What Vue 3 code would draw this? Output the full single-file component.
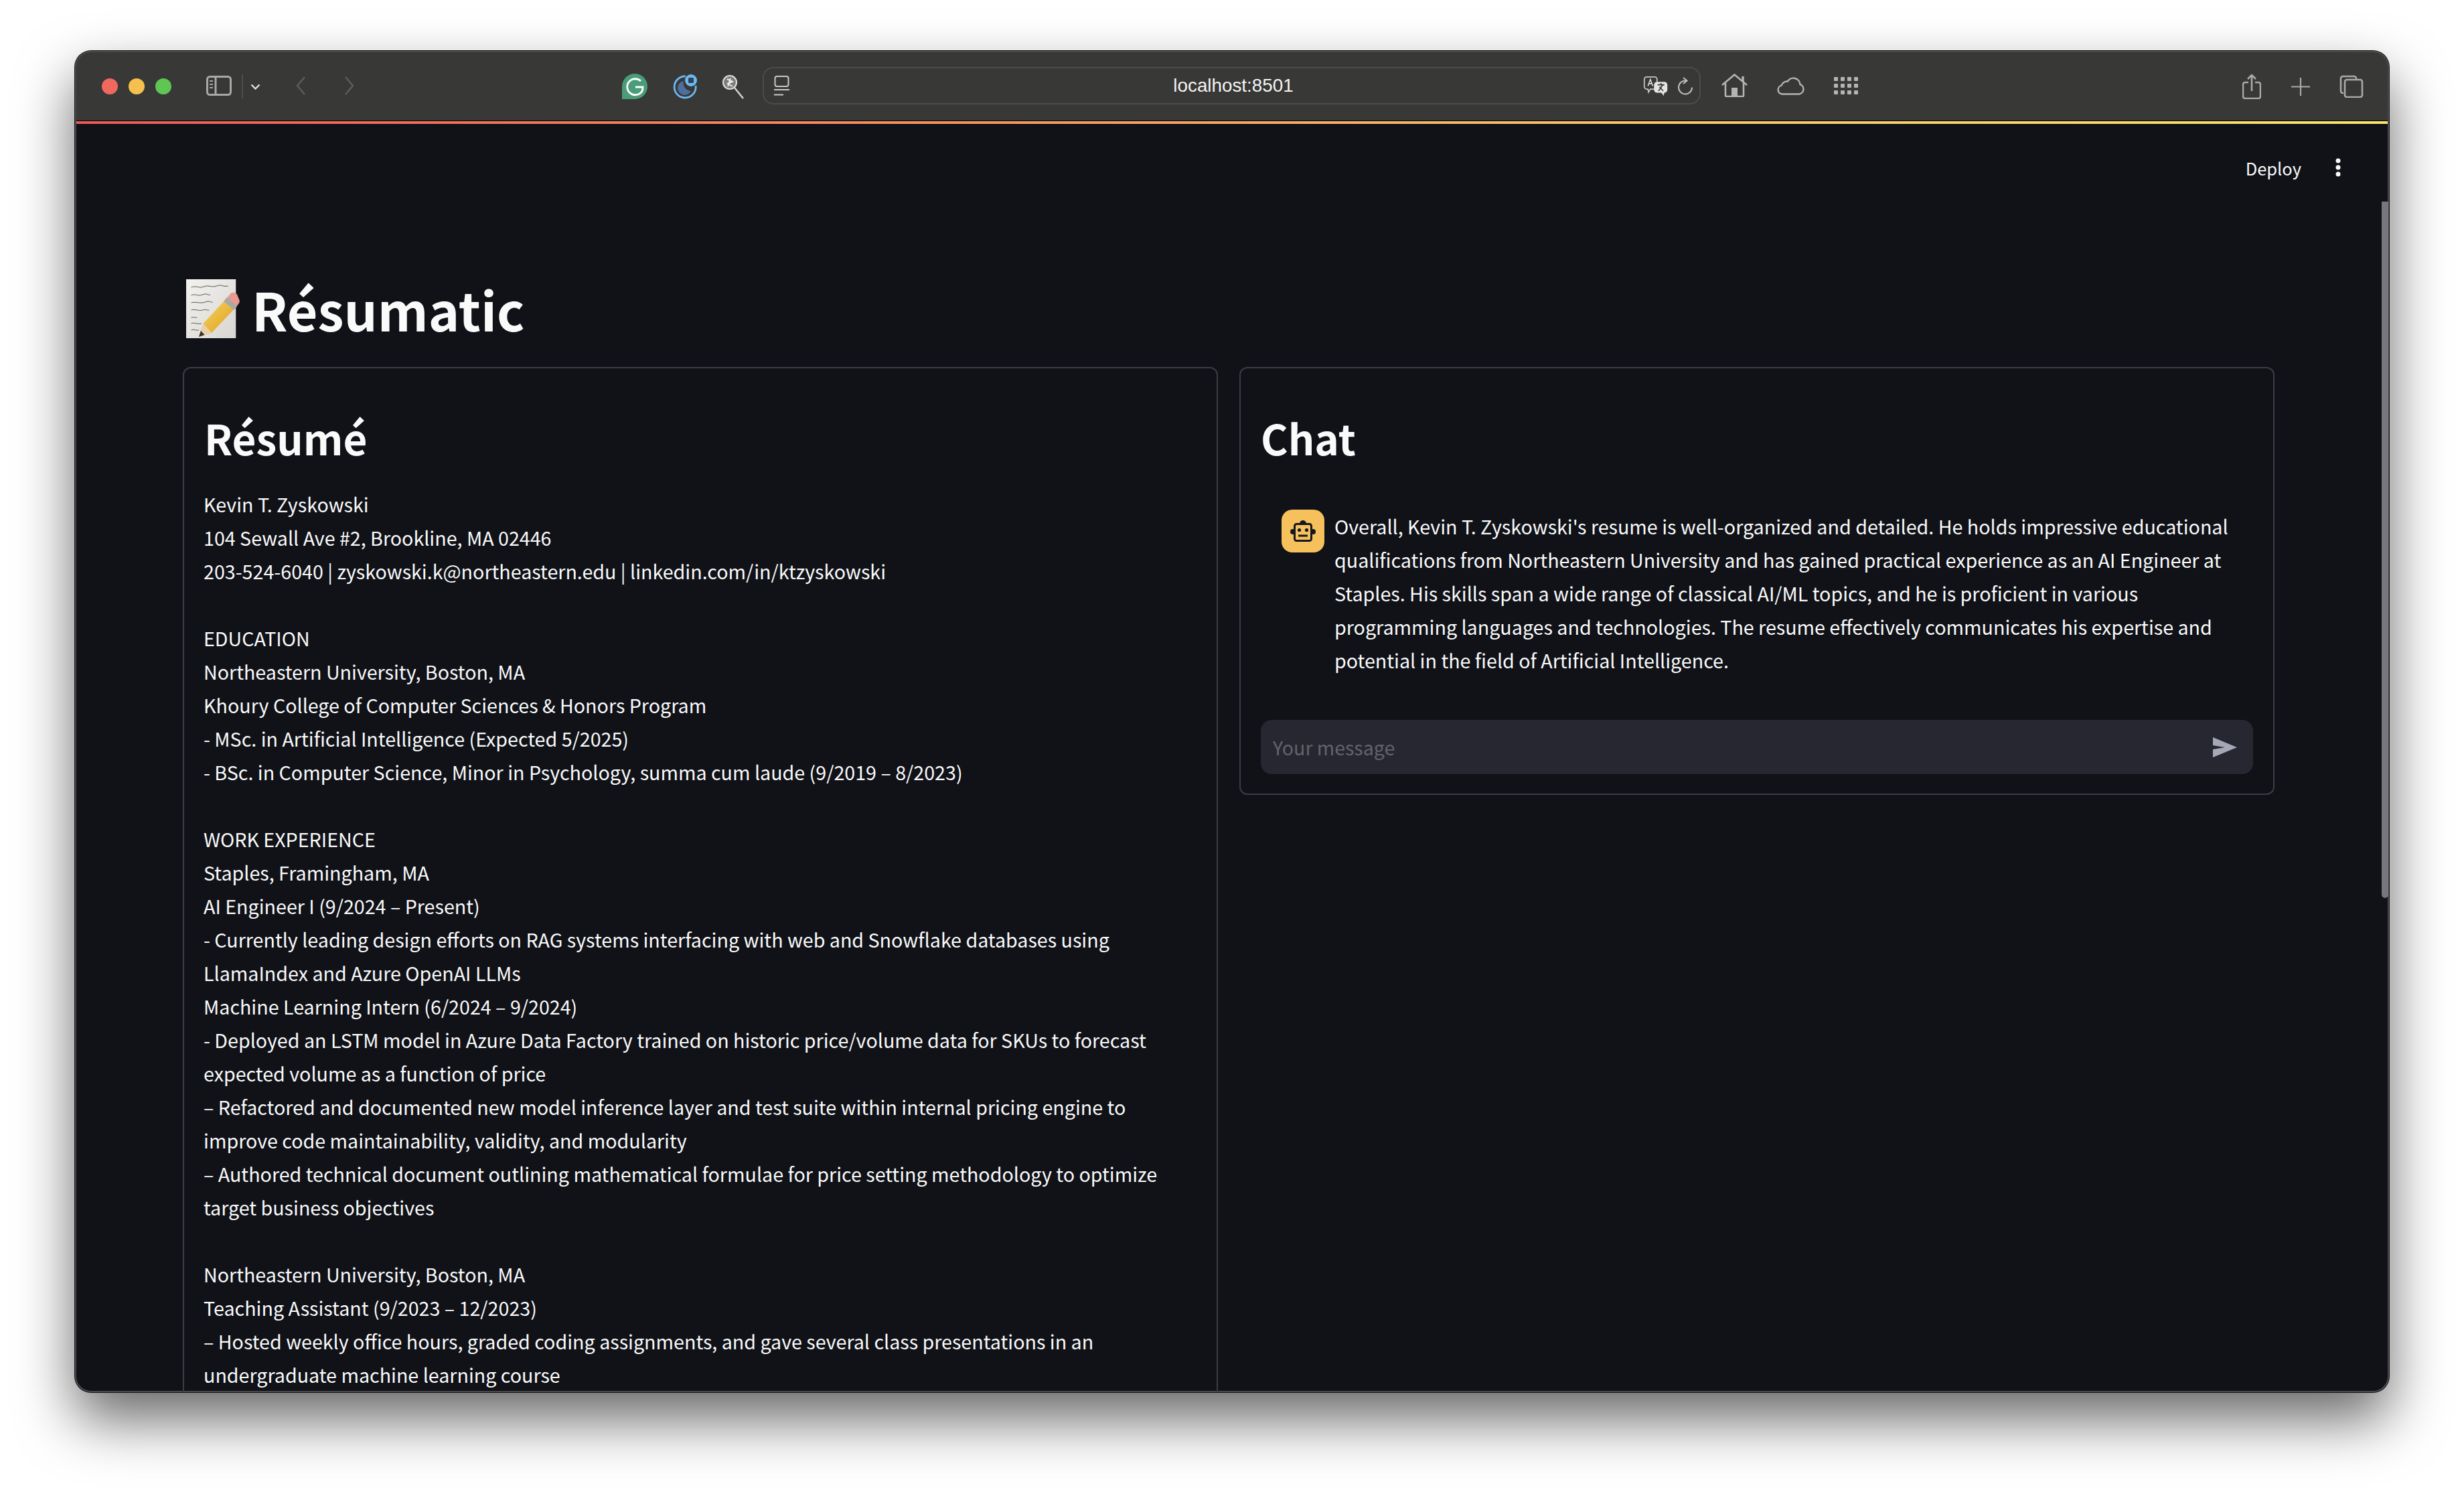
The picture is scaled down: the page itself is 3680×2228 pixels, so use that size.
<script setup>
const resume = [
  'Kevin T. Zyskowski',
  '104 Sewall Ave #2, Brookline, MA 02446',
  '203-524-6040 | zyskowski.k@northeastern.edu | linkedin.com/in/ktzyskowski',
  '',
  'EDUCATION',
  'Northeastern University, Boston, MA',
  'Khoury College of Computer Sciences & Honors Program',
  '- MSc. in Artificial Intelligence (Expected 5/2025)',
  '- BSc. in Computer Science, Minor in Psychology, summa cum laude (9/2019 – 8/2023)',
  '',
  'WORK EXPERIENCE',
  'Staples, Framingham, MA',
  'AI Engineer I (9/2024 – Present)',
  '- Currently leading design efforts on RAG systems interfacing with web and Snowflake databases using',
  'LlamaIndex and Azure OpenAI LLMs',
  'Machine Learning Intern (6/2024 – 9/2024)',
  '- Deployed an LSTM model in Azure Data Factory trained on historic price/volume data for SKUs to forecast',
  'expected volume as a function of price',
  '– Refactored and documented new model inference layer and test suite within internal pricing engine to',
  'improve code maintainability, validity, and modularity',
  '– Authored technical document outlining mathematical formulae for price setting methodology to optimize',
  'target business objectives',
  '',
  'Northeastern University, Boston, MA',
  'Teaching Assistant (9/2023 – 12/2023)',
  '– Hosted weekly office hours, graded coding assignments, and gave several class presentations in an',
  'undergraduate machine learning course',
]
const chat = [
  "Overall, Kevin T. Zyskowski's resume is well-organized and detailed. He holds impressive educational",
  'qualifications from Northeastern University and has gained practical experience as an AI Engineer at',
  'Staples. His skills span a wide range of classical AI/ML topics, and he is proficient in various',
  'programming languages and technologies. The resume effectively communicates his expertise and',
  'potential in the field of Artificial Intelligence.',
]
</script>

<template>
  <div class="page">
    <div class="window">
      <header class="toolbar">
        <div class="lights"><i class="r"></i><i class="y"></i><i class="g"></i></div>
        <svg class="ic sidebar" width="38" height="30" viewBox="0 0 38 30" fill="none" stroke="#a8a8a8" stroke-width="3"><rect x="1.500" y="1.500" width="35" height="27" rx="4"/><path d="M14 1.500v27"/><path d="M5 8h5M5 13h5M5 18h5" stroke-width="2"/></svg>
        <i class="divider"></i>
        <svg class="ic chev" width="15" height="9" viewBox="0 0 15 9" fill="none" stroke="#e0e0e0" stroke-width="2.400"><path d="M1.500 1.500l6 6 6-6"/></svg>
        <svg class="ic back" width="16" height="30" viewBox="0 0 16 30" fill="none" stroke="#5c5c5c" stroke-width="2.500"><path d="M14 2L3 15l11 13"/></svg>
        <svg class="ic fwd" width="17" height="30" viewBox="0 0 17 30" fill="none" stroke="#5c5c5c" stroke-width="2.500"><path d="M3 2l11 13L3 28"/></svg>
        <svg class="ic gram" width="38" height="38" viewBox="0 0 38 38"><path d="M19 0a19 19 0 1 1 0 38H0V19A19 19 0 0 1 19 0z" fill="#4a9d78"/><path d="M28 11a12 12 0 1 0 2 15c.7-1.500 1-3 1-6H20" fill="none" stroke="#fff" stroke-width="2.800"/></svg>
        <svg class="ic ring" width="37" height="37" viewBox="0 0 37 37"><path d="M20 3a16 16 0 1 0 15 14" fill="none" stroke="#6cb8f0" stroke-width="2.800"/><path d="M17 10a10.500 10.500 0 1 0 11 15 12 12 0 0 1-11-15z" fill="#4c6f9e"/><circle cx="28" cy="9" r="9" fill="#6cb8f0"/><rect x="24" y="5" width="8" height="8" rx="1.500" fill="#2f4258"/></svg>
        <svg class="ic lens" width="33" height="37" viewBox="0 0 33 37" fill="none"><circle cx="12" cy="12" r="10" fill="#7c7c7c" stroke="#dcdcdc" stroke-width="2.200"/><path d="M8 7l8 4-7 3 7 4M13 6l-4 12" stroke="#ececec" stroke-width="2"/><path d="M19 20l13 16" stroke="#d0d0d0" stroke-width="2.600"/></svg>
        <div class="urlbar">
          <svg class="ic reader" width="23" height="31" viewBox="0 0 23 31" fill="none" stroke="#c8c8c8" stroke-width="2"><rect x="1.500" y="1" width="20" height="15" rx="3"/><path d="M0 21h23" stroke-width="2"/><path d="M0 28.500h14" stroke-width="2"/></svg>
          <span class="url">localhost:8501</span>
          <svg class="ic translate" width="38" height="29" viewBox="0 0 40 32"><path d="M5 1h13a4 4 0 0 1 4 4v12a4 4 0 0 1-4 4h-7l-3 5-1-5H5a4 4 0 0 1-4-4V5a4 4 0 0 1 4-4z" fill="#383836" stroke="#c4c4c4" stroke-width="2"/><path d="M7 16l4-11 4 11M8.500 12h5" fill="none" stroke="#dcdcdc" stroke-width="1.800"/><path d="M22 9h12a5 5 0 0 1 5 5v8a5 5 0 0 1-5 5l-1 5-4-5h-7a5 5 0 0 1-5-5v-8a5 5 0 0 1 5-5z" fill="#e4e4e4"/><path d="M23 14h11M28.500 11v3M24.500 24l7-10M32 24l-6-7" fill="none" stroke="#333" stroke-width="1.800"/></svg>
          <svg class="ic reload" width="23" height="27" viewBox="0 0 23 27" fill="none" stroke="#c0c0c0" stroke-width="2"><path d="M13 5.500a10 10 0 1 0 9 10"/><path d="M9 1l5.500 4.500L9 10"/></svg>
        </div>
        <svg class="ic home" width="39" height="35" viewBox="0 0 39 35" fill="none" stroke="#b4b4b4" stroke-width="2.600"><path d="M1 17L19.500 1.500 38 17"/><path d="M6 14v18.500a1.500 1.500 0 0 0 1.500 1.500h24a1.500 1.500 0 0 0 1.500-1.500V14"/><rect x="15" y="21" width="9" height="13" fill="#b4b4b4" stroke="none"/><path d="M32 4v8" stroke-width="3.500"/></svg>
        <svg class="ic cloud" width="41" height="29" viewBox="0 0 41 29" fill="none" stroke="#b4b4b4" stroke-width="2.400"><path d="M10 27.500H8a6.500 6.500 0 0 1-1.500-12.800A9 9 0 0 1 16 8.500 10 10 0 0 1 34.500 13 7.500 7.500 0 0 1 33 27.500z"/></svg>
        <svg class="ic grid" width="36" height="26" viewBox="0 0 36 26" fill="#b4b4b4"><rect v-for="(c, i) in 12" :key="i" :x="(i % 4) * 10" :y="Math.floor(i / 4) * 10" width="6" height="6" rx="1"/></svg>
        <div class="grow"></div>
        <svg class="ic share" width="28" height="37" viewBox="0 0 28 37" fill="none" stroke="#aaa" stroke-width="2.600"><path d="M9 12H4a3 3 0 0 0-3 3v18a3 3 0 0 0 3 3h20a3 3 0 0 0 3-3V15a3 3 0 0 0-3-3h-5"/><path d="M14 25V2M8 7l6-6 6 6"/></svg>
        <svg class="ic plus" width="28" height="27" viewBox="0 0 28 27" stroke="#aaa" stroke-width="2.200"><path d="M14 0v27M0 13.500h28"/></svg>
        <svg class="ic tabs" width="36" height="34" viewBox="0 0 36 34" fill="none" stroke="#aaa" stroke-width="2.600"><path d="M6 27H5a3 3 0 0 1-3-3V5a3 3 0 0 1 3-3h17a3 3 0 0 1 3 3v2"/><rect x="8" y="7" width="26" height="26" rx="3"/></svg>
      </header>
      <div class="stripe"></div>
      <main class="app">
        <div class="topbar">
          <span class="deploy">Deploy</span>
          <svg class="more" width="8" height="28" viewBox="0 0 8 28" fill="#fafafa"><circle cx="4" cy="4" r="3.500"/><circle cx="4" cy="14" r="3.500"/><circle cx="4" cy="24" r="3.500"/></svg>
        </div>
        <div class="scrollbar"></div>
        <h1 class="title">
          <svg class="memo" width="80" height="88" viewBox="0 0 84 88" preserveAspectRatio="none">
            <defs>
              <linearGradient id="paper" x1="0" y1="0" x2="1" y2="1"><stop offset="0" stop-color="#f4f2ee"/><stop offset="1" stop-color="#d8d6d2"/></linearGradient>
              <linearGradient id="pencil" x1="0" y1="0" x2="1" y2="1"><stop offset="0" stop-color="#f8d860"/><stop offset="1" stop-color="#dc9a20"/></linearGradient>
            </defs>
            <rect x="0" y="0" width="78" height="88" fill="url(#paper)"/>
            <g fill="none" stroke="#555" stroke-width="1"><path d="M8 12c8-3 12 2 20-1s12 2 20-1 10 2 18 0M8 24c6-3 10 2 18-1s8 2 12 0M8 35c8-2 14 2 22-1s10 2 12 0M8 46c6-2 12 2 18 0s6 1 10 0M8 57c4-1 6 1 9 0M8 66c6-2 10 2 16 0M8 76c4-2 8 1 12 0"/></g>
            <path d="M62 30L78 42 40 80 20 86 27 66z" fill="url(#pencil)"/>
            <path d="M27 66l13 14-20 6z" fill="#e8d0a8"/>
            <path d="M20 86l3-9 6 6z" fill="#333"/>
            <path d="M62 30l8-9a7 7 0 0 1 10 2l3 7a6 6 0 0 1-1 7l-4 5z" fill="#e89a90"/>
            <path d="M59 33l5-6 16 13-5 6z" fill="#a8a8a8"/>
          </svg>
          <span>Résumatic</span>
        </h1>
        <div class="columns">
          <section class="card">
            <h2>Résumé</h2>
            <div class="lines">
              <div v-for="(l, i) in resume" :key="i" class="line">{{ l }}</div>
            </div>
          </section>
          <section class="card chat">
            <h2>Chat</h2>
            <div class="message">
              <div class="avatar">
                <svg width="38" height="32" viewBox="0 0 38 32"><circle cx="19" cy="5" r="5" fill="#14171f"/><circle cx="4" cy="17" r="4" fill="#14171f"/><circle cx="34" cy="17" r="4" fill="#14171f"/><rect x="6.500" y="5.500" width="25" height="25" rx="3" fill="#f6c05c" stroke="#14171f" stroke-width="3"/><circle cx="13.500" cy="14.500" r="2.600" fill="#14171f"/><circle cx="24.500" cy="14.500" r="2.600" fill="#14171f"/><rect x="12" y="21.500" width="14" height="3" fill="#14171f"/></svg>
              </div>
              <div class="msgtext"><div v-for="(l, i) in chat" :key="i" class="line">{{ l }}</div></div>
            </div>
            <div class="input">
              <span class="placeholder">Your message</span>
              <svg class="send" width="36" height="30" viewBox="0 0 36 30"><path d="M0 0l36 15L0 30V18l18-3L0 12z" fill="#a6a8b8"/></svg>
            </div>
          </section>
        </div>
      </main>
    </div>
  </div>
</template>

<style>
html, body { margin: 0; background: #fff; }
</style>

<style scoped>
.page { width: 3680px; height: 2228px; padding: 76px 112px 149px 112px; box-sizing: border-box; overflow: hidden; background: #fff; font-family: "Noto Sans CJK SC", "Noto Sans", sans-serif; }
.window { height: 2003px; border-radius: 24px; overflow: hidden; display: flex; flex-direction: column; box-shadow: 0 0 0 1px #151515, 0 40px 85px rgba(0,0,0,.6); background: #101218; outline: 2px solid #4a4a4c; outline-offset: -2px; }
.toolbar { height: 104px; flex: none; box-sizing: border-box; background: #383836; display: flex; align-items: center; padding: 0 38px 0 40px; border-top: 2px solid #555; }
.ic { flex: none; }
.lights { display: flex; gap: 16px; }
.lights i { width: 24px; height: 24px; border-radius: 50%; display: block; }
.r { background: #f0695f; } .y { background: #f6c04f; } .g { background: #60c653; }
.sidebar { margin-left: 52px; margin-top: -2px; }
.divider { width: 2px; height: 36px; margin-left: 15px; background: #4d4d4d; flex: none; }
.chev { margin-left: 11px; }
.back { margin-left: 52px; margin-top: -2px; }
.fwd { margin-left: 56px; margin-top: -2px; }
.gram { margin-left: 399px; }
.ring { margin-left: 37px; }
.lens { margin-left: 37px; }
.urlbar { width: 1401px; height: 56px; margin-left: 28px; margin-top: -2px; box-sizing: border-box; border: 2px solid #4c4c4a; border-radius: 16px; display: flex; align-items: center; padding: 0 10px 0 15px; position: relative; }
.url { position: absolute; left: 5px; right: 0; text-align: center; color: #f4f4f4; font-size: 27.8px; font-family: "Liberation Sans", sans-serif; }
.translate { margin-left: auto; }
.reload { margin-left: 13px; }
.home { margin-left: 31px; margin-top: -3px; }
.cloud { margin-left: 44px; margin-top: -3px; }
.grid { margin-left: 44px; margin-top: -2px; }
.grow { flex: 1; }
.plus { margin-left: 45px; }
.tabs { margin-left: 44px; }
.stripe { height: 5px; flex: none; border-top: 1px solid #000; background: linear-gradient(90deg, #ee5a56 0%, #f78c5e 33%, #fbc46c 66%, #fbe46e 100%); box-sizing: border-box; }
.app { flex: 1; position: relative; padding: 0 0 0 161px; color: #fafafa; overflow: hidden; }
.topbar { height: 64px; display: flex; align-items: center; justify-content: flex-end; gap: 51px; padding: 33px 72px 0 0; font-size: 25.500px; }
.deploy { color: #fafafa; }
.scrollbar { position: absolute; right: 1px; top: 116px; width: 10px; height: 1040px; border-radius: 0 0 6px 6px; background: #76777d; }
.title { margin: 123px 0 0 5px; height: 112px; display: flex; align-items: center; gap: 18px; font-size: 78.800px; font-weight: 700; line-height: 112px; }
.columns { display: flex; gap: 32px; align-items: flex-start; margin-top: 31px; }
.card { width: 1546px; flex: none; box-sizing: border-box; border: 2px solid #3b3d44; border-radius: 12px; padding: 51px 30px 29px; }
.card:first-child { height: 2000px; }
h2 { margin: 0; font-size: 62px; font-weight: 600; line-height: 104px; }
.lines { margin: 23px 0 0 -1px; }
.line { font-size: 28.650px; line-height: 50px; min-height: 50px; white-space: nowrap; }
.message { display: flex; gap: 15px; margin: 56px 0 0 31px; }
.avatar { width: 64px; height: 64px; flex: none; border-radius: 16px; background: #f6c05c; display: flex; align-items: center; justify-content: center; }
.input { margin: 64px 0 0; height: 81px; border-radius: 16px; background: #262730; display: flex; align-items: center; justify-content: space-between; padding: 0 24px 0 18px; }
.placeholder { font-size: 28.500px; color: #62636f; }
</style>
